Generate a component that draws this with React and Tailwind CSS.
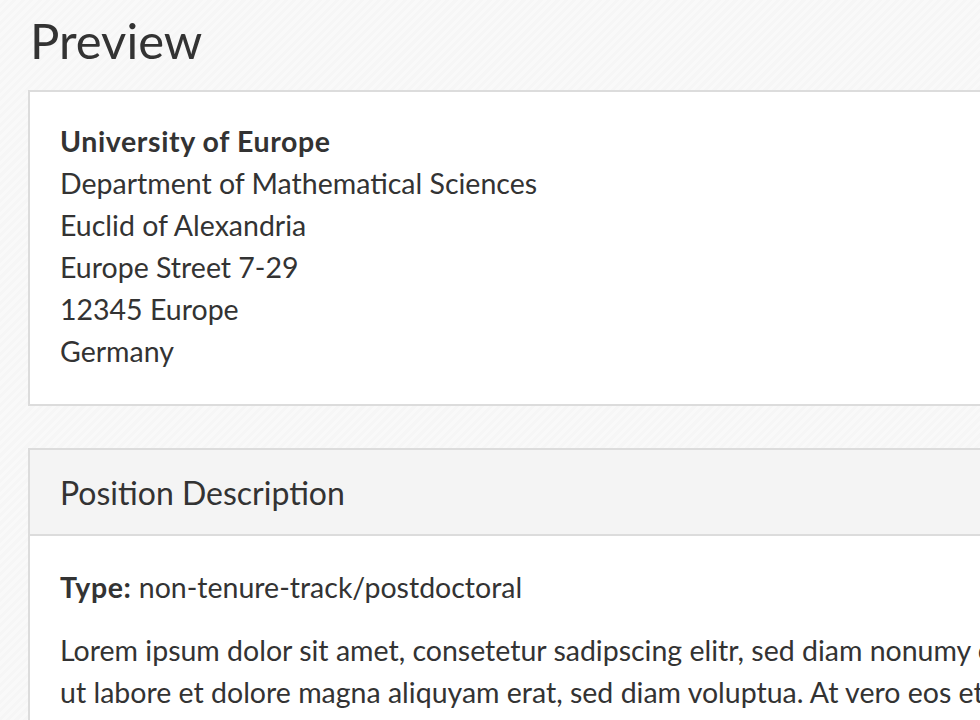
import React from "react";

const address = [
  "Department of Mathematical Sciences",
  "Euclid of Alexandria",
  "Europe Street 7-29",
  "12345 Europe",
  "Germany",
];

export default function App() {
  return (
    <div
      className="h-[720px] w-full overflow-hidden bg-[#f8f8f8] bg-[repeating-linear-gradient(135deg,#f9f9f9_0px,#f9f9f9_3px,#f6f6f6_3px,#f6f6f6_6px)] text-[#333] font-['Lato','Liberation_Sans',sans-serif]"
    >
      <div className="w-[1400px] pl-[28px]">
        <h1 className="pt-[10px] pl-[2px] text-[49px] leading-[60px] font-normal">Preview</h1>

        {/* address card */}
        <div className="mt-[20px] border-2 border-[#dcdcdc] bg-white pt-[28px] pb-[32px] px-[30px] text-[28.5px] leading-[42px]">
          <div className="font-bold tracking-[0.6px]">University of Europe</div>
          {address.map((line) => (
            <div key={line}>{line}</div>
          ))}
        </div>

        {/* position description */}
        <div className="mt-[42px] border-2 border-[#dcdcdc] bg-white">
          <div className="flex h-[86px] items-center border-b-2 border-[#dcdcdc] bg-[#f4f4f4] px-[30px] pt-[1px] text-[32px]">
            Position Description
          </div>
          <div className="px-[30px] pt-[30px] pb-[30px] text-[28.5px] leading-[42px]">
            <p>
              <span className="font-bold tracking-[0.6px]">Type:</span> non-tenure-track/postdoctoral
            </p>
            <p className="mt-[21px] whitespace-nowrap">
              Lorem ipsum dolor sit amet, consetetur sadipscing elitr, sed diam nonumy eirmod tempor invidunt
              <br />
              ut labore et dolore magna aliquyam erat, sed diam voluptua. At vero eos et accusam et justo duo dolores et ea rebum.
              <br />
              Stet clita kasd gubergren, no sea takimata sanctus est Lorem ipsum dolor sit amet.
            </p>
          </div>
        </div>
      </div>
    </div>
  );
}
